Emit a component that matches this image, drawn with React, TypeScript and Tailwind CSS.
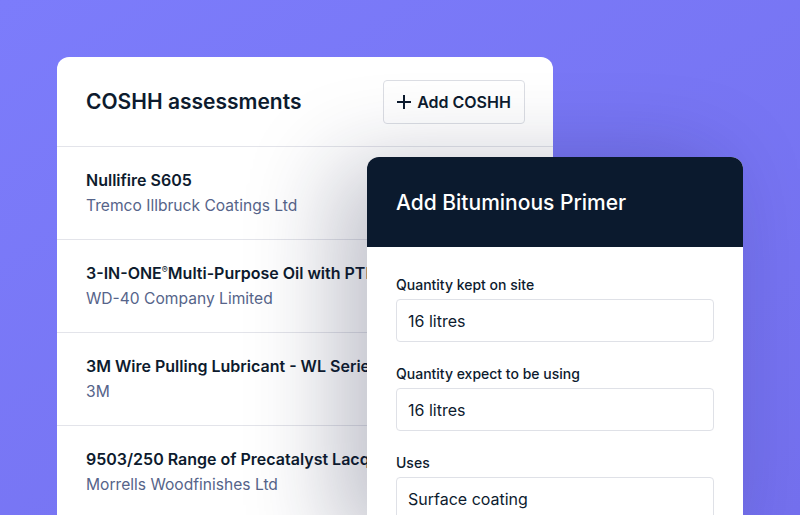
import React from "react";

const rows = [
  { title: <>Nullifire S605</>, sub: "Tremco Illbruck Coatings Ltd" },
  {
    title: (
      <>
        3-IN-ONE<span className="text-[9px] leading-none font-normal relative top-[-6px]">®</span>Multi-Purpose Oil with PTFE
      </>
    ),
    sub: "WD-40 Company Limited",
  },
  { title: <>3M Wire Pulling Lubricant - WL Series</>, sub: "3M" },
  { title: <>9503/250 Range of Precatalyst Lacquer</>, sub: "Morrells Woodfinishes Ltd" },
];

const fields = [
  { label: "Quantity kept on site", value: "16 litres" },
  { label: "Quantity expect to be using", value: "16 litres" },
  { label: "Uses", value: "Surface coating" },
];

export default function App() {
  return (
    <div
      className="relative w-[800px] h-[515px] overflow-hidden bg-gradient-to-br from-[#7c7cfb] to-[#7470ee] pt-[57px] pl-[57px]"
      style={{ fontFamily: "Inter, 'Open Sans', sans-serif" }}
    >
      <div className="w-[496px] h-[470px] rounded-t-[12px] bg-white overflow-hidden">
        <div className="h-[90px] flex items-center justify-between pl-[29px] pr-[28px] border-b border-[#e3e4ea]">
          <div className="text-[21px] font-semibold text-[#0d1b2e] pt-[1px]">COSHH assessments</div>
          <div className="w-[142px] h-[44px] flex items-center justify-center gap-[6px] border border-[#dcdee4] rounded-[4px] text-[16px] font-semibold text-[#0d1b2e]">
            <svg width="14" height="14" viewBox="0 0 14 14" fill="none" stroke="#0d1b2e" strokeWidth="2">
              <path d="M7 0v14M0 7h14" />
            </svg>
            Add COSHH
          </div>
        </div>
        {rows.map((r, i) => (
          <div key={i} className="h-[93px] pl-[29px] pt-[23px] border-b border-[#e3e4ea] whitespace-nowrap">
            <div className="text-[16px] leading-[20px] font-semibold text-[#0d1b2e]">{r.title}</div>
            <div className="mt-[6px] text-[15.6px] leading-[20px] text-[#56648a]">{r.sub}</div>
          </div>
        ))}
      </div>

      <div className="absolute left-[367px] top-[157px] w-[376px] h-[380px] rounded-t-[12px] bg-white overflow-hidden shadow-[-30px_10px_90px_rgba(20,24,60,0.28)]">
        <div className="h-[90px] bg-[#0b1a2e] flex items-center px-[29px] pt-[2px]">
          <div className="text-[21px] font-medium text-white">Add Bituminous Primer</div>
        </div>
        <div className="px-[29px] pt-[29px] flex flex-col gap-[23px]">
          {fields.map((f, i) => (
            <div key={i}>
              <div className="text-[14px] leading-[18px] font-medium text-[#0d1b2e]">{f.label}</div>
              <div className="mt-[5px] h-[43px] border border-[#dfe1e7] rounded-[4px] flex items-center px-[11px] text-[16px] text-[#0d1b2e]">
                {f.value}
              </div>
            </div>
          ))}
        </div>
      </div>
    </div>
  );
}
